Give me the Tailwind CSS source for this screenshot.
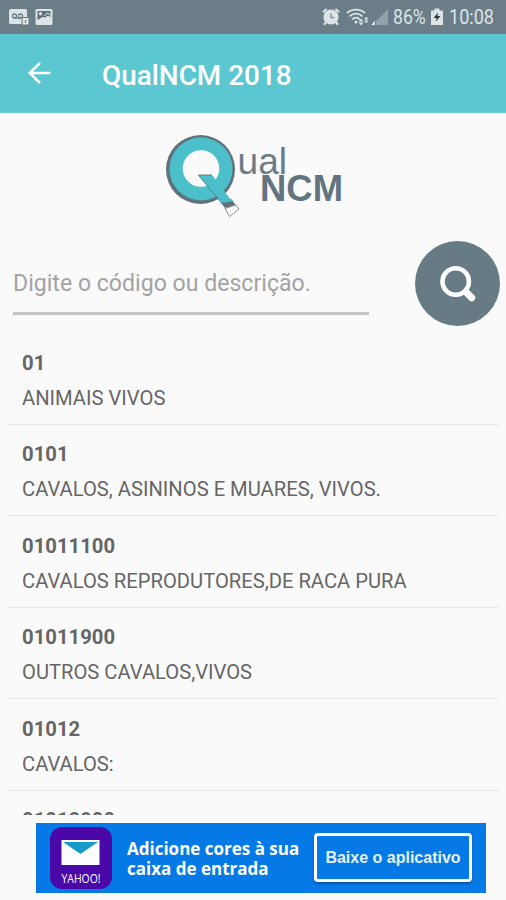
<!DOCTYPE html>
<html lang="pt-BR">
<head>
    <meta charset="UTF-8">
    <meta name="viewport" content="width=device-width, initial-scale=1.0">
    <title>QualNCM 2018</title>
    <script src="https://cdn.jsdelivr.net/npm/@tailwindcss/browser@4"></script>
</head>
<body class="bg-[#fafafa] font-[Roboto,sans-serif]">
    <div class="w-[506px] h-[900px] flex flex-col overflow-hidden">

        <!-- Status bar -->
        <div class="h-[34px] shrink-0 bg-[#6b7d87] flex items-center pl-[9px] pr-[11px] text-[#dde4e8]">
            <svg class="w-[20px] h-[18px]" viewBox="0 0 20 18">
                <rect x="0" y="1" width="18" height="15" rx="1.5" fill="#dde4e8"/>
                <circle cx="5.5" cy="8" r="2" fill="none" stroke="#6b7d87" stroke-width="1.3"/>
                <circle cx="11.5" cy="8" r="2" fill="none" stroke="#6b7d87" stroke-width="1.3"/>
                <path d="M5 10.2h7" stroke="#6b7d87" stroke-width="1.2"/>
                <rect x="13" y="9.5" width="7" height="7.5" fill="#dde4e8" stroke="#6b7d87" stroke-width="1"/>
                <path d="M16.5 12v3" stroke="#6b7d87" stroke-width="1"/>
            </svg>
            <svg class="w-[18px] h-[18px] ml-[6px]" viewBox="0 0 18 18">
                <rect x="0.5" y="1" width="17" height="16" rx="1.5" fill="#dde4e8"/>
                <path d="M2.500 3h13v6l-3-1.500-2 2-3-0.500-5 3z" fill="#5c6d76"/>
                <circle cx="5.5" cy="5.8" r="1.7" fill="#dde4e8"/>
                <path d="M9 8l3-3 3.500 2" fill="none" stroke="#dde4e8"/>
            </svg>
            <div class="grow"></div>
            <svg class="w-[18px] h-[18px]" viewBox="0 0 18 18">
                <circle cx="9" cy="9" r="7.6" fill="#dde4e8"/>
                <path d="M1 4.300l3.600-3.300M17 4.300l-3.600-3.300M4 14l-2 2.800M14 14l2 2.800" stroke="#dde4e8" stroke-width="2.200"/>
                <path d="M9 5.500v4h3.300" fill="none" stroke="#7f9099" stroke-width="1.400"/>
            </svg>
            <svg class="w-[23px] h-[18px] ml-[6px]" viewBox="0 0 23 18" fill="none" stroke="#dde4e8" stroke-width="1.800">
                <path d="M1 5C6 0.500 14 0.500 19 5M3.600 8.300c3.600-3.600 9.200-3.600 12.800 0M6.300 11.300c2.200-2.200 5.200-2.200 7.400 0"/>
                <circle cx="10" cy="14" r="1.500" fill="#dde4e8" stroke="none"/>
                <path d="M12.500 14.500h5l-2.500 3zM12.500 13.500h5L15 10.500zM18 11.500h4.500l-2.250-2.800zM18 12.500h4.500l-2.250 2.800z" fill="#dde4e8" stroke="none"/>
            </svg>
            <svg class="w-[18px] h-[18px] ml-[2px]" viewBox="0 0 18 18">
                <path d="M17 1v16H5V13z" fill="#93a2aa"/>
                <path d="M4 12.500v4.500H0.200z" fill="#dde4e8"/>
            </svg>
            <span class="text-[20.5px] leading-none w-[34px] ml-[4px] mt-[1px] whitespace-nowrap"><span class="inline-block origin-left scale-x-[.86]">86%</span></span>
            <svg class="w-[12px] h-[18px] ml-[4px]" viewBox="0 0 12 18">
                <path d="M3.500 0.500h5v2H12V17H0V2.500h3.500z" fill="#dde4e8"/>
                <path d="M7 4.500L2.500 10h3L4.800 13.500l4.700-5.500h-3z" fill="#2f3b42"/>
            </svg>
            <span class="text-[20.5px] leading-none w-[46px] ml-[6px] mt-[1px] whitespace-nowrap"><span class="inline-block origin-left scale-x-[.88]">10:08</span></span>
        </div>

        <!-- App bar -->
        <div class="h-[79px] shrink-0 bg-[#5bc7d1] border-b border-[#72cdd6] flex items-center text-white">
            <svg class="w-[24px] h-[24px] ml-[27px]" viewBox="0 0 24 24" fill="none" stroke="#fff" stroke-width="2.600">
                <path d="M23.500 12H3M13 1.800L2.800 12 13 22.200"/>
            </svg>
            <h1 class="ml-[51px] mt-[5px] text-[27.9px] leading-none font-medium whitespace-nowrap">QualNCM 2018</h1>
        </div>

        <!-- Logo -->
        <div class="h-[117px] shrink-0 flex justify-center">
            <svg class="w-[210px] h-[110px] mt-[7px] mr-[-4px]" viewBox="0 0 210 110">
                <circle cx="50.5" cy="49.5" r="34.5" fill="#62727c"/>
                <circle cx="51" cy="49" r="31.5" fill="#4bc0cb"/>
                <circle cx="51" cy="48.500" r="18.300" fill="#fafafa"/>
                <path d="M48.300 55H62L84.500 84.500H73z" fill="#4bc0cb"/>
                <path d="M62 55H48.300L73 84.500" fill="none" stroke="#62727c" stroke-width="0.900"/>
                <path d="M68.500 79.500H81.500L86 85.500 75 88z" fill="#62727c"/>
                <path d="M68.500 79.500l13-0.500 1.500 2-7 1.500-6 0z" fill="#4bc0cb"/>
                <path d="M75 88.500l10.500-3.500 3.500 4-9.500 7.500z" fill="#fafafa" stroke="#8a8f93" stroke-width="1"/>
                <text x="87.500" y="54" font-family="Liberation Sans, sans-serif" font-size="36.500" textLength="49.500" lengthAdjust="spacingAndGlyphs" fill="#6d7d87">ual</text>
                <text x="110" y="81" font-family="Liberation Sans, sans-serif" font-weight="bold" font-size="37" textLength="83" lengthAdjust="spacingAndGlyphs" fill="#62747f">NCM</text>
            </svg>
        </div>

        <!-- Search -->
        <div class="h-[103px] shrink-0 flex pl-[13px] pr-[6px] pt-[11px] justify-between">
            <div class="w-[356px] h-[74px] border-b-[3px] border-[#c6c6c6] pt-[29px] text-[23.1px] leading-[28px] text-[#a3a3a3] whitespace-nowrap">Digite o código ou descrição.</div>
            <button class="w-[85px] h-[85px] rounded-full bg-[#677b85] flex items-center justify-center">
                <svg class="w-[36px] h-[36px]" viewBox="0 0 36 36" fill="none" stroke="#fff">
                    <circle cx="15.7" cy="15.5" r="13.2" stroke-width="4.600"/>
                    <path d="M24.500 24.500L27 27" stroke-width="5"/>
                    <path d="M27 27L31.700 31.700" stroke-width="7" stroke-linecap="round"/>
                </svg>
            </button>
        </div>

        <!-- Results -->
        <div class="h-[482px] shrink-0 overflow-hidden pl-[8px] pr-[7px] text-[#666] whitespace-nowrap">
            <div class="h-[91.5px] pl-[14px] pt-[16.5px] border-b border-[#e9e9e9]">
                <p class="text-[20.3px] leading-[26px] font-bold">01</p>
                <p class="text-[20.2px] leading-[26px] mt-[9px]">ANIMAIS VIVOS</p>
            </div>
            <div class="h-[91.5px] pl-[14px] pt-[16.5px] border-b border-[#e9e9e9]">
                <p class="text-[20.3px] leading-[26px] font-bold">0101</p>
                <p class="text-[20.2px] leading-[26px] mt-[9px]">CAVALOS, ASININOS E MUARES, VIVOS.</p>
            </div>
            <div class="h-[91.5px] pl-[14px] pt-[16.5px] border-b border-[#e9e9e9]">
                <p class="text-[20.3px] leading-[26px] font-bold">01011100</p>
                <p class="text-[20.2px] leading-[26px] mt-[9px]">CAVALOS REPRODUTORES,DE RACA PURA</p>
            </div>
            <div class="h-[91.5px] pl-[14px] pt-[16.5px] border-b border-[#e9e9e9]">
                <p class="text-[20.3px] leading-[26px] font-bold">01011900</p>
                <p class="text-[20.2px] leading-[26px] mt-[9px]">OUTROS CAVALOS,VIVOS</p>
            </div>
            <div class="h-[91.5px] pl-[14px] pt-[16.5px] border-b border-[#e9e9e9]">
                <p class="text-[20.3px] leading-[26px] font-bold">01012</p>
                <p class="text-[20.2px] leading-[26px] mt-[9px]">CAVALOS:</p>
            </div>
            <div class="h-[91.5px] pl-[14px] pt-[16.5px]">
                <p class="text-[20.3px] leading-[26px] font-bold">01012900</p>
            </div>
        </div>

        <!-- Ad banner -->
        <div class="w-[450px] h-[70px] shrink-0 mt-[8px] ml-[36px] bg-[#0579e6] flex items-center text-white">
            <svg class="w-[62px] h-[62px] ml-[14px]" viewBox="0 0 62 62">
                <rect width="62" height="62" rx="12" fill="#4a08a8"/>
                <rect x="11.5" y="13" width="38" height="25" fill="#fff"/>
                <path d="M13 15h35L30.500 27z" fill="#169bcb"/>
                <text x="11.5" y="55.500" font-family="Open Sans, sans-serif" font-size="13" textLength="39" lengthAdjust="spacingAndGlyphs" fill="#fff">YAHOO!</text>
            </svg>
            <p class="ml-[15px] w-[173px] mt-[2px] font-[Open_Sans,sans-serif] font-bold text-[17px] leading-[20px] whitespace-nowrap">Adicione cores à sua<br>caixa de entrada</p>
            <div class="ml-[14px] w-[158px] h-[49px] mt-[-1px] border-[3px] border-white rounded-[4px] shadow-[0_2px_2px_#0558aa] flex items-center justify-center font-[Liberation_Sans,sans-serif] font-bold text-[16px] text-[#e6f2ff] whitespace-nowrap">Baixe o aplicativo</div>
        </div>
    </div>
</body>
</html>
